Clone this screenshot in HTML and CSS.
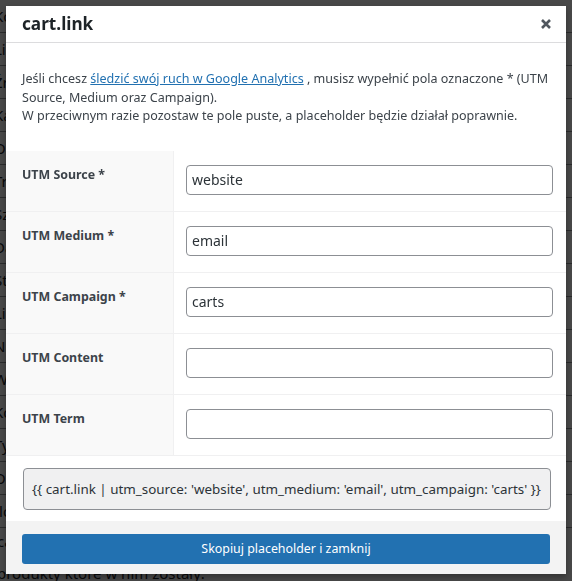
FILE: index.html
```html
<!DOCTYPE html>
<html lang="pl">
<head>
<meta charset="utf-8">
<title>cart.link</title>
<link rel="stylesheet" href="styles.css">
</head>
<body>
<div class="page">
  <div class="page-row">Koszyk</div>
  <div class="page-row">Link</div>
  <div class="page-row">Źródło</div>
  <div class="page-row">Kampania</div>
  <div class="page-row">Opis</div>
  <div class="page-row">Treść</div>
  <div class="page-row">Szablon</div>
  <div class="page-row">Data</div>
  <div class="page-row">Status</div>
  <div class="page-row">Lista</div>
  <div class="page-row">Nazwa</div>
  <div class="page-row">Wartość</div>
  <div class="page-row">Kod</div>
  <div class="page-row">Typ</div>
  <div class="page-row">Opcje</div>
  <div class="page-row">Ilość</div>
  <div class="page-text">cały koszyk</div>
  <div class="page-text page-last">produkty które w nim zostały:</div>
</div>
<div class="overlay"></div>
<div class="modal" role="dialog" aria-labelledby="modal-title">
  <div class="modal-header">
    <h2 class="modal-title" id="modal-title">cart.link</h2>
    <button class="modal-close" type="button" aria-label="Zamknij">
      <svg viewBox="0 0 12 12" width="12" height="12" aria-hidden="true"><path d="M2 2 L10 10 M10 2 L2 10" stroke="currentColor" stroke-width="2.6" stroke-linecap="butt"/></svg>
    </button>
  </div>
  <div class="modal-body">
    <p class="intro">Jeśli chcesz <a href="#">śledzić swój ruch w Google Analytics</a> , musisz wypełnić pola oznaczone * (UTM Source, Medium oraz Campaign).<br>W przeciwnym razie pozostaw te pole puste, a placeholder będzie działał poprawnie.</p>
  </div>
  <div class="fields">
    <div class="field-row">
      <div class="field-label">UTM Source *</div>
      <div class="field-input"><input type="text" value="website"></div>
    </div>
    <div class="field-row">
      <div class="field-label">UTM Medium *</div>
      <div class="field-input"><input type="text" value="email"></div>
    </div>
    <div class="field-row">
      <div class="field-label">UTM Campaign *</div>
      <div class="field-input"><input type="text" value="carts"></div>
    </div>
    <div class="field-row">
      <div class="field-label">UTM Content</div>
      <div class="field-input"><input type="text" value=""></div>
    </div>
    <div class="field-row">
      <div class="field-label">UTM Term</div>
      <div class="field-input"><input type="text" value=""></div>
    </div>
  </div>
  <div class="code-wrap">
    <div class="code-box">{{ cart.link | utm_source: 'website', utm_medium: 'email', utm_campaign: 'carts' }}</div>
  </div>
  <div class="modal-footer">
    <button class="btn-primary" type="button">Skopiuj placeholder i zamknij</button>
  </div>
</div>
</body>
</html>
```

FILE: styles.css
```css
* { box-sizing: border-box; }

html, body {
  margin: 0;
  padding: 0;
  height: 100%;
  overflow: hidden;
}

body {
  font-family: "Noto Sans", "Open Sans", sans-serif;
  background: #f0f0f1;
  color: #3c434a;
}

.page {
  margin-left: -6px;
}

.page-row {
  height: 33px;
  line-height: 33px;
  border-bottom: 1px solid #8c8f94;
  font-size: 15px;
  color: #1d2327;
}

.page-text {
  font-size: 15px;
  line-height: 22px;
  color: #1d2327;
  padding-left: 3px;
  margin-top: 2px;
}

.page-last {
  margin-top: 10px;
}

.overlay {
  position: fixed;
  inset: 0;
  background: rgba(0, 0, 0, 0.7);
}

.modal {
  position: absolute;
  left: 6px;
  top: 6px;
  width: 560px;
  height: 568px;
  background: #fff;
  display: flex;
  flex-direction: column;
  box-shadow: 0 3px 6px rgba(0, 0, 0, 0.3);
}

.modal-header {
  height: 37px;
  border-bottom: 1px solid #dcdcde;
  display: flex;
  align-items: center;
  justify-content: space-between;
  padding: 0 14px 0 16px;
  flex: none;
}

.modal-title {
  margin: 0;
  font-size: 17.2px;
  font-weight: 700;
  color: #1d2327;
  line-height: 1;
}

.modal-close {
  border: 0;
  background: none;
  padding: 0;
  width: 12px;
  height: 12px;
  color: #50575e;
  display: flex;
  cursor: pointer;
}

.modal-body {
  padding: 27px 16px 0 16px;
  flex: none;
}

.intro {
  margin: 0;
  font-size: 12.55px;
  line-height: 18.5px;
  color: #3c434a;
}

.intro a {
  color: #2271b1;
  text-decoration: underline;
}

.fields {
  margin-top: 25px;
  flex: none;
}

.field-row {
  display: flex;
  height: 61px;
  border-bottom: 1px solid #f0f0f1;
}

.field-label {
  width: 168px;
  flex: none;
  background: #f9f9f9;
  border-right: 1px solid #f0f0f1;
  padding: 15px 8px 0 16px;
  font-size: 12.4px;
  font-weight: 700;
  line-height: 18.5px;
  color: #3c434a;
}

.field-input {
  flex: 1;
  padding: 14px 13px 0 12px;
}

.field-input input {
  display: block;
  width: 100%;
  height: 30px;
  border: 1px solid #8c8f94;
  border-radius: 4px;
  padding: 0 5px;
  font-family: inherit;
  font-size: 14px;
  color: #2c3338;
  background: #fff;
}

.code-wrap {
  padding: 12px 15px 11px 17px;
  flex: none;
}

.code-box {
  height: 42px;
  background: #f0f0f1;
  border: 1px solid #8c8f94;
  border-radius: 4px;
  display: flex;
  align-items: center;
  padding: 0 8px;
  font-size: 13.4px;
  color: #2c3338;
  white-space: nowrap;
  overflow: hidden;
}

.modal-footer {
  flex: 1;
  background: #f3f3f3;
  padding: 13px 16px 0 16px;
}

.btn-primary {
  display: block;
  width: 100%;
  height: 30px;
  border: 0;
  border-radius: 3px;
  background: #2271b1;
  color: #fff;
  font-family: inherit;
  font-size: 12.4px;
  cursor: pointer;
}
```
